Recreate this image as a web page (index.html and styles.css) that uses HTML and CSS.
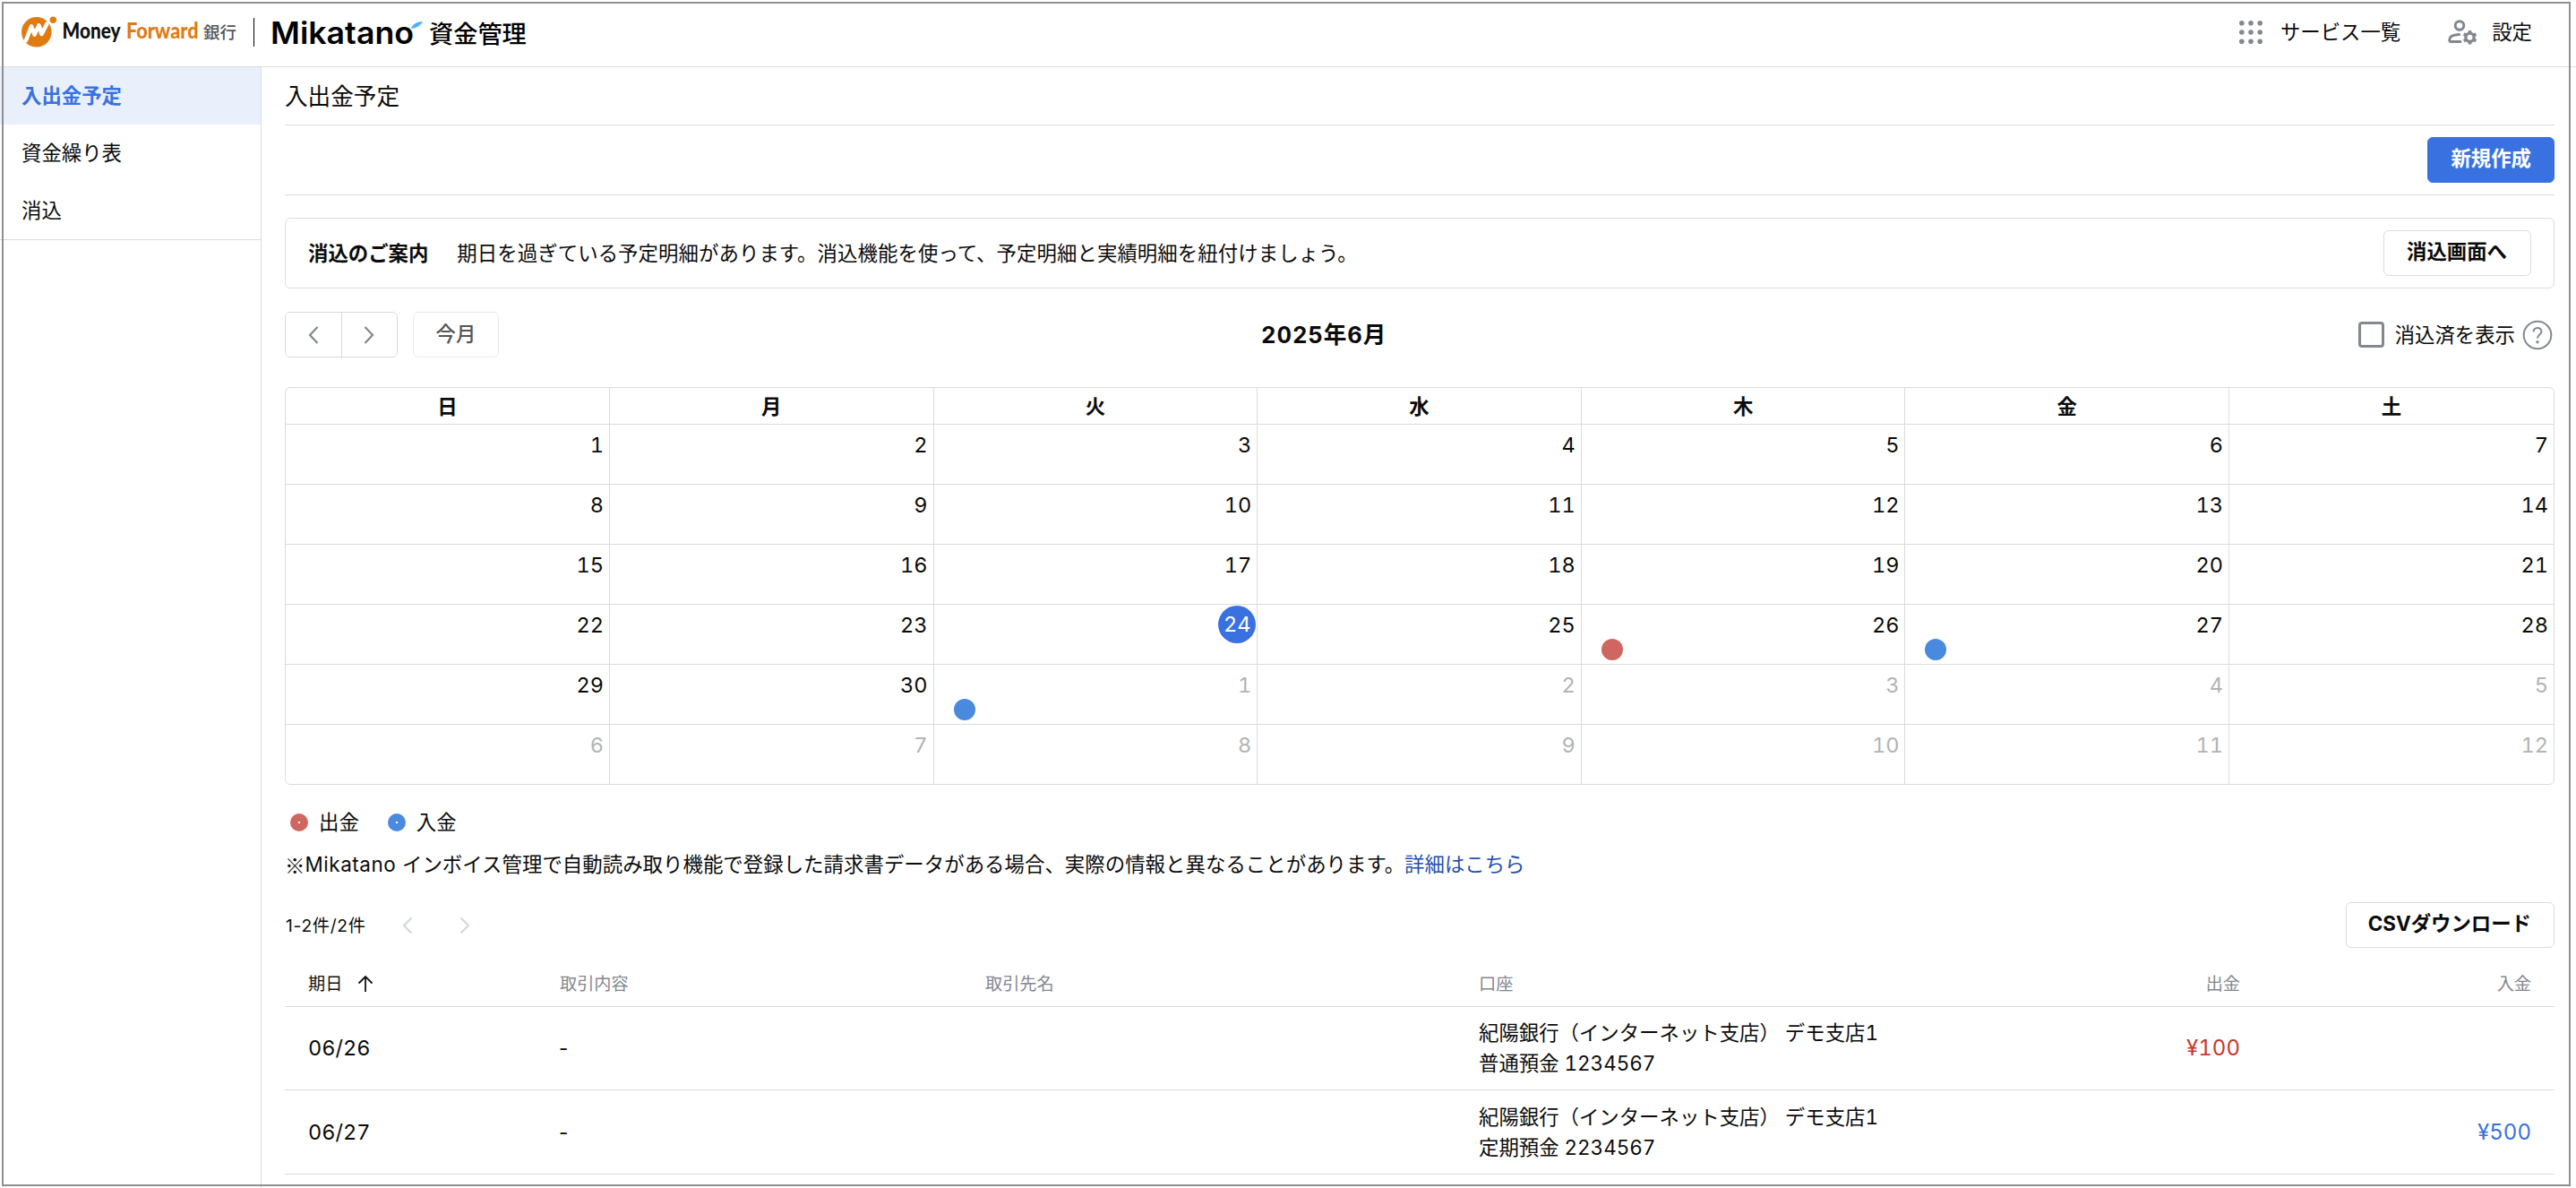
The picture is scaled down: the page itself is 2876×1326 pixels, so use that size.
FILE: index.html
```html
<!DOCTYPE html>
<html lang="ja">
<head>
<meta charset="utf-8">
<title>入出金予定</title>
<link rel="stylesheet" href="styles.css">
</head>
<body>
<header class="header">
  <svg class="brand" width="242" height="40" viewBox="0 0 242 40">
    <circle cx="16.8" cy="19.8" r="16.8" fill="#e07b12"/>
    <path d="M28 0 L40 0 L40 16 L33 12 Z" fill="#fff"/>
    <path d="M5 29 L11 13.5 L14.500 22.500 L19.500 12.500 L22.500 22 L28.500 10.500" fill="none" stroke="#fff" stroke-width="4.600" stroke-linejoin="round" stroke-linecap="round"/>
    <circle cx="35.300" cy="6.300" r="3.700" fill="#e07b12"/>
    <text class="brand-name" x="45.500" y="27" textLength="65" lengthAdjust="spacingAndGlyphs">Money</text>
    <text class="brand-name brand-accent" x="117" y="27" textLength="80.500" lengthAdjust="spacingAndGlyphs">Forward</text>
    <text class="brand-bank" x="203" y="27">銀行</text>
  </svg>
  <span class="brand-rule"></span>
  <svg class="product" width="286" height="40" viewBox="0 0 286 40">
    <text class="product-name" x="-2" y="33" textLength="160" lengthAdjust="spacingAndGlyphs">Mikatano</text>
    <path d="M155 16 C156.500 11 161 8 168 8 C165.500 13 160.500 15.500 155 16 Z" fill="#4cb5fa"/>
    <text class="product-sub" x="175" y="31.500">資金管理</text>
  </svg>
  <nav class="header-nav">
    <a class="header-link services">
      <svg width="26" height="26" viewBox="0 0 26 26" fill="#83888f">
        <circle cx="2.800" cy="2.800" r="2.800"/><circle cx="13" cy="2.800" r="2.800"/><circle cx="23.200" cy="2.800" r="2.800"/>
        <circle cx="2.800" cy="13" r="2.800"/><circle cx="13" cy="13" r="2.800"/><circle cx="23.200" cy="13" r="2.800"/>
        <circle cx="2.800" cy="23.200" r="2.800"/><circle cx="13" cy="23.200" r="2.800"/><circle cx="23.200" cy="23.200" r="2.800"/>
      </svg>サービス一覧</a>
    <a class="header-link settings">
      <svg width="32" height="28" viewBox="0 0 32 28" fill="none" stroke="#83888f" stroke-width="3">
        <circle cx="13" cy="6.500" r="4.800"/>
        <path d="M12.500 16.500 C6 16.800 1.800 19 1.800 22.200 V23 Q1.800 24.500 3.300 24.500 H14" stroke-linecap="round"/>
        <circle cx="24.500" cy="19.800" r="4.600" stroke-width="3.200"/>
        <path d="M24.500 15.200V12M24.500 24.400V27.600M20.500 17.500L17.700 15.900M28.500 22.100L31.300 23.700M28.500 17.500L31.300 15.900M20.500 22.100L17.700 23.700" stroke-width="3.600"/>
      </svg>設定</a>
  </nav>
</header>
<div class="layout">
  <aside class="sidebar">
    <a class="side-item active">入出金予定</a>
    <a class="side-item">資金繰り表</a>
    <a class="side-item">消込</a>
  </aside>
  <main class="main">
    <h1 class="title">入出金予定</h1>
    <div class="actions"><button class="btn primary">新規作成</button></div>
    <section class="notice">
      <strong>消込のご案内</strong>
      <span class="notice-text">期日を過ぎている予定明細があります。消込機能を使って、予定明細と実績明細を紐付けましょう。</span>
      <button class="btn">消込画面へ</button>
    </section>
    <div class="toolbar">
      <div class="toolbar-left">
        <div class="pager-group">
          <button><svg width="12" height="22" viewBox="0 0 12 22"><path d="M10.500 2 L2 11 L10.500 20"/></svg></button>
          <button><svg width="12" height="22" viewBox="0 0 12 22"><path d="M1.500 2 L10 11 L1.500 20"/></svg></button>
        </div>
        <button class="btn today-btn">今月</button>
      </div>
      <h2 class="month">2025年6月</h2>
      <label class="toolbar-right"><span class="checkbox"></span>消込済を表示
        <svg width="34" height="34" viewBox="0 0 34 34" fill="none" stroke="#83888f" stroke-width="2"><circle cx="17" cy="17" r="15.300"/><path d="M12.500 13.500 C12.500 7.500 21.500 7.500 21.500 13 C21.500 16.500 17 16.500 17 20.500"/><circle cx="17" cy="24.800" r="1.700" fill="#83888f" stroke="none"/></svg>
      </label>
    </div>
    <section class="calendar">
      <div class="week head"><div>日</div><div>月</div><div>火</div><div>水</div><div>木</div><div>金</div><div>土</div></div>
      <div class="week"><div>1</div><div>2</div><div>3</div><div>4</div><div>5</div><div>6</div><div>7</div></div>
      <div class="week"><div>8</div><div>9</div><div>10</div><div>11</div><div>12</div><div>13</div><div>14</div></div>
      <div class="week"><div>15</div><div>16</div><div>17</div><div>18</div><div>19</div><div>20</div><div>21</div></div>
      <div class="week"><div>22</div><div>23</div><div><span class="today">24</span></div><div>25</div><div>26<i class="dot out"></i></div><div>27<i class="dot in"></i></div><div>28</div></div>
      <div class="week"><div>29</div><div>30</div><div class="other">1<i class="dot in"></i></div><div class="other">2</div><div class="other">3</div><div class="other">4</div><div class="other">5</div></div>
      <div class="week"><div class="other">6</div><div class="other">7</div><div class="other">8</div><div class="other">9</div><div class="other">10</div><div class="other">11</div><div class="other">12</div></div>
    </section>
    <div class="legend">
      <span class="legend-item"><i class="key out"></i>出金</span>
      <span class="legend-item"><i class="key in"></i>入金</span>
    </div>
    <p class="note"><span class="mark">※</span><span class="note-text"><span class="latin">Mikatano </span>インボイス管理で自動読み取り機能で登録した請求書データがある場合、実際の情報と異なることがあります。</span><a>詳細はこちら</a></p>
    <div class="list-bar">
      <span class="count">1-2件/2件</span>
      <svg class="chev" width="12" height="20" viewBox="0 0 12 20"><path d="M10.500 1.500 L2 10 L10.500 18.500"/></svg>
      <svg class="chev" width="12" height="20" viewBox="0 0 12 20"><path d="M1.500 1.500 L10 10 L1.500 18.500"/></svg>
      <button class="btn csv">CSVダウンロード</button>
    </div>
    <div class="table">
      <div class="row thead">
        <div class="sorted">期日<svg width="18" height="20" viewBox="0 0 18 20" fill="none" stroke="#111" stroke-width="1.800"><path d="M9 19V2M1.500 9.500L9 2L16.500 9.500"/></svg></div>
        <div>取引内容</div><div>取引先名</div><div>口座</div><div class="num">出金</div><div class="num">入金</div>
      </div>
      <div class="row">
        <div class="date">06/26</div><div class="desc">-</div><div></div>
        <div class="account">紀陽銀行（インターネット支店） デモ支店1<br>普通預金 1234567</div>
        <div class="num red">¥100</div><div class="num"></div>
      </div>
      <div class="row">
        <div class="date">06/27</div><div class="desc">-</div><div></div>
        <div class="account">紀陽銀行（インターネット支店） デモ支店1<br>定期預金 2234567</div>
        <div class="num"></div><div class="num blue">¥500</div>
      </div>
    </div>
  </main>
</div>
<div class="window-frame"></div>
</body>
</html>
```
FILE: styles.css
```css
* { box-sizing: border-box; }
body {
  margin: 0; height: 1326px; overflow: hidden; position: relative;
  background: #fff; color: #0b0b0b;
  font: 22.4px/34px Inter, "Noto Sans CJK JP", sans-serif;
  font-variant-numeric: tabular-nums;
}
h1, h2, p { margin: 0; font-weight: 400; }
button { font: inherit; color: inherit; background: #fff; margin: 0; }
svg { display: block; flex: none; }

.header { height: 75px; display: flex; border-bottom: 1px solid #dadcdc; padding: 16px 49px 0 24px; }
.brand-name { font: 900 24px Lato, sans-serif; fill: #111; }
.brand-name.brand-accent { fill: #e07b12; }
.brand-bank { font: 500 18.500px "Noto Sans CJK JP", sans-serif; fill: #555; }
.brand-rule { width: 1px; height: 32px; margin: 4px 20px 0 17px; background: #000; }
.product { overflow: visible; }
.product-name { font: 600 34px Inter, sans-serif; fill: #000; }
.product-sub { font: 500 27.200px "Noto Sans CJK JP", sans-serif; fill: #000; }
.header-nav { margin-left: auto; display: flex; height: 40px; align-items: center; }
.header-link { display: flex; align-items: center; }
.services { gap: 20px; margin-right: 53px; }
.settings { gap: 17px; }

.layout { display: flex; }
.sidebar { width: 292px; height: 1251px; border-right: 1px solid #dadcdc; flex: none; }
.side-item { display: block; height: 64px; line-height: 64px; padding-left: 24px; }
.side-item:last-child { height: 65px; border-bottom: 1px solid #dadcdc; }
.side-item.active { background: #e9f0fc; color: #3972e0; font-weight: 700; }

.main { width: 2534px; margin-left: 26px; }
.title { height: 65px; border-bottom: 1px solid #dadcdc; font-size: 25.600px; line-height: 66px; }
.actions { height: 78px; border-bottom: 1px solid #dadcdc; display: flex; justify-content: flex-end; padding-top: 13px; }
.btn { height: 51px; border: 1px solid #dadcdc; border-radius: 6px; font-weight: 700; padding: 0 25px 3px; white-space: nowrap; }
.primary { background: #3972e0; border-color: #3972e0; color: #fff; }

.notice { margin-top: 25px; height: 79px; border: 1px solid #dadcdc; border-radius: 6px; display: flex; align-items: center; padding: 0 25px; }
.notice strong { margin-right: 32px; }
.notice-text { letter-spacing: .08px; }
.notice .btn { margin-left: auto; padding: 0 26px 3px 25px; }

.toolbar { margin-top: 26px; height: 51px; display: grid; grid-template-columns: 1091px 1fr auto; align-items: center; }
.toolbar-left { display: flex; gap: 17px; }
.pager-group { display: flex; width: 126px; height: 51px; border: 1px solid #d5dadc; border-radius: 6px; overflow: hidden; }
.pager-group button { flex: 1; border: 0; display: flex; align-items: center; justify-content: center; padding: 0; }
.pager-group button + button { border-left: 1px solid #d5dadc; }
.pager-group path { fill: none; stroke: #83888f; stroke-width: 2.200; }
.today-btn { width: 96px; border-color: #e8eaea; color: #555; font-weight: 500; padding: 0 0 1px; }
.month { font-size: 25.600px; font-weight: 700; letter-spacing: .9px; margin-left: -1px; }
.toolbar-right { display: flex; justify-content: flex-end; align-items: center; padding-right: 2px; }
.toolbar-right svg { margin-left: 8px; }
.checkbox { width: 29px; height: 29px; border: 3px solid #83888f; border-radius: 4px; margin-right: 12px; }

.calendar { margin-top: 33px; border: 1px solid #dadcdc; border-radius: 6px; height: 444px; }
.week { display: grid; grid-template-columns: 362px repeat(5, 361.600px) 1fr; height: 67px; }
.week + .week { border-top: 1px solid #dadcdc; }
.week > div { position: relative; text-align: right; padding: 6px 6px 0 0; border-right: 1px solid #dadcdc; }
.week > div:last-child { border-right: 0; }
.week.head { height: 40px; }
.week.head > div { text-align: center; font-weight: 700; padding: 4px 0 0; }
.week:not(.head) { font-size: 23.500px; }
.week .other { color: #b3b3b3; }
.today { position: absolute; right: 1px; top: 1px; width: 42px; height: 42px; border-radius: 50%; line-height: 42px; text-align: center; background: #3972e0; color: #fff; }
.dot { position: absolute; left: 22px; top: 38px; width: 24px; height: 24px; border-radius: 50%; }
.out { background: #d06660; }
.in { background: #4a8ade; }

.legend { margin-top: 25px; height: 34px; display: flex; gap: 32px; padding-left: 6px; }
.legend-item { display: flex; align-items: center; gap: 12px; }
.key { width: 20px; height: 20px; border-radius: 50%; display: flex; align-items: center; justify-content: center; }
.key::after { content: ""; width: 2px; height: 2px; background: #fff; }
.note { margin-top: 13px; height: 34px; white-space: nowrap; display: flex; }
.mark { font-family: "Noto Sans CJK JP", sans-serif; }
.note-text { letter-spacing: .05px; }
.latin { letter-spacing: .6px; }
.note a { color: #1f4fb0; }

.list-bar { margin-top: 25px; height: 51px; display: flex; align-items: center; }
.count { font-size: 19.200px; width: 131px; padding: 1px 0 0 1px; letter-spacing: .7px; font-variant-numeric: normal; }
.chev { margin-right: 52px; }
.chev path { fill: none; stroke: #d5dadc; stroke-width: 2.400; }
.csv { margin-left: auto; padding: 0 25px 3px 24px; }

.table { margin-top: 17px; }
.row { display: grid; grid-template-columns: 281px 475px 551px 525px 325px 325px; height: 94px; align-items: center; border-bottom: 1px solid #dadcdc; padding-left: 26px; padding-right: 26px; }
.row.thead { height: 49px; font-size: 19.200px; color: #83888f; padding-bottom: 2px; }
.row:nth-child(2) { height: 93px; }
.thead .sorted { display: flex; align-items: center; gap: 17px; color: #111; }
.date { font-size: 23.500px; }
.desc { font-variant-numeric: normal; margin-left: -1px; }
.num { text-align: right; }
.row:not(.thead) .num { font-size: 24px; }
.red { color: #c8372d; }
.blue { color: #3972e0; }

.window-frame { position: absolute; left: 2px; top: 2px; width: 2868px; height: 1322px; border: 2px solid #8f8f92; pointer-events: none; }
```
